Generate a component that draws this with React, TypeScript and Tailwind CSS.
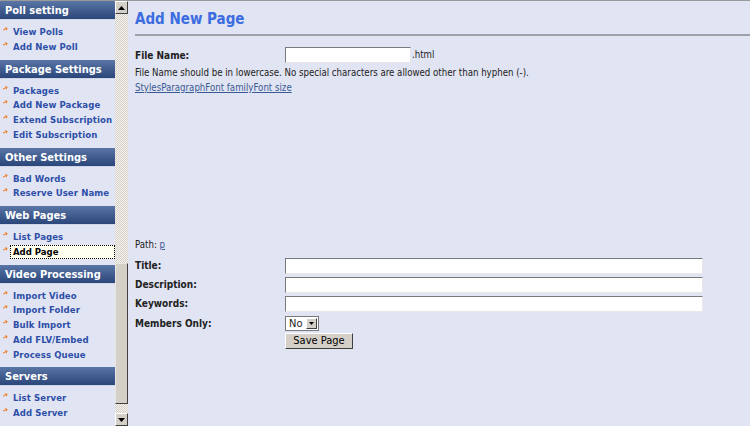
import React from "react";

const sections: { title: string; items: string[]; active?: string }[] = [
  { title: "Poll setting", items: ["View Polls", "Add New Poll"] },
  { title: "Package Settings", items: ["Packages", "Add New Package", "Extend Subscription", "Edit Subscription"] },
  { title: "Other Settings", items: ["Bad Words", "Reserve User Name"] },
  { title: "Web Pages", items: ["List Pages", "Add Page"], active: "Add Page" },
  { title: "Video Processing", items: ["Import Video", "Import Folder", "Bulk Import", "Add FLV/Embed", "Process Queue"] },
  { title: "Servers", items: ["List Server", "Add Server"] },
];

const Bullet = () => (
  <svg width="5" height="5" viewBox="0 0 5 5" className="absolute left-[3px] top-[2px]">
    <path d="M0 1.5 L3 1.5 L3 0 L5 2 L3 4 L3 2.5 L0 2.5 Z" fill="#f07a1e" transform="rotate(-25 2.5 2.5)" />
  </svg>
);

const Input = ({ w }: { w: string }) => (
  <div className={`h-[16px] bg-white border border-t-[#7a7a7a] border-l-[#7a7a7a] border-r-[#e8e8e8] border-b-[#e8e8e8] ${w}`} />
);

export default function App() {
  const font = { fontFamily: "Tahoma, 'DejaVu Sans Condensed', 'DejaVu Sans', sans-serif" };
  return (
    <div className="w-[750px] h-[426px] overflow-hidden flex bg-[#e1e4f2] border-t border-[#9a9a9a]" style={font}>
      {/* Sidebar */}
      <div className="w-[115px] flex flex-col shrink-0">
        {sections.map((s) => (
          <div key={s.title} className="flex flex-col">
            <div className="h-[19px] bg-gradient-to-b from-[#5a76a6] to-[#2b467a] text-white font-bold text-[11px] leading-[19px] pl-[5px] border-b border-[#d0d6e6] whitespace-nowrap">
              {s.title}
            </div>
            <div className="flex flex-col pt-[5px] pb-[5px]">
              {s.items.map((it) =>
                it === s.active ? (
                  <div key={it} className="relative h-[14.75px]">
                    <Bullet />
                    <div className="ml-[10px] h-[14px] border border-dotted border-black bg-[#fffff0] text-black font-bold text-[9.5px] leading-[12px] pl-[2px] whitespace-nowrap">
                      {it}
                    </div>
                  </div>
                ) : (
                  <div key={it} className="relative h-[14.75px] pl-[13px] text-[#2d4fa8] font-bold text-[9.5px] leading-[14px] whitespace-nowrap tracking-[0.1px]">
                    <Bullet />
                    {it}
                  </div>
                )
              )}
            </div>
          </div>
        ))}
      </div>

      {/* Scrollbar */}
      <div className="w-[13px] shrink-0 flex flex-col bg-[repeating-conic-gradient(#f4f3ef_0_25%,#d4d0c8_0_50%)] bg-[length:2px_2px]">
        <div className="h-[13px] bg-[#d4d0c8] border border-t-white border-l-white border-r-[#404040] border-b-[#404040] flex items-center justify-center">
          <svg width="7" height="4" viewBox="0 0 7 4"><path d="M3.5 0 L7 4 L0 4 Z" fill="#000" /></svg>
        </div>
        <div className="flex-1" />
        <div className="h-[141px] bg-[#d4d0c8] border border-t-[#e8e6e0] border-l-[#e8e6e0] border-r-[#404040] border-b-[#404040]" />
        <div className="h-[9px]" />
        <div className="h-[13px] bg-[#d4d0c8] border border-t-white border-l-white border-r-[#404040] border-b-[#404040] flex items-center justify-center">
          <svg width="7" height="4" viewBox="0 0 7 4"><path d="M0 0 L7 0 L3.5 4 Z" fill="#000" /></svg>
        </div>
      </div>

      {/* Main */}
      <div className="flex-1 flex flex-col pl-[7px] text-[9.6px] text-[#222]">
        <div className="h-[33px] flex items-center text-[#3b6ce0] font-bold text-[15px] pt-[3px]">Add New Page</div>
        <div className="h-[2px] bg-[#a0a0a8]" />
        <div className="h-[11px]" />
        <div className="flex items-center h-[16px]">
          <div className="w-[150px] font-bold text-[10px]">File Name:</div>
          <Input w="w-[126px]" />
          <span className="ml-[1px]">.html</span>
        </div>
        <div className="h-[17px] leading-[17px] mt-[1px]">
          File Name should be in lowercase. No special characters are allowed other than hyphen (-).
        </div>
        <div className="h-[14px] leading-[14px] text-[#3a5a94] underline">StylesParagraphFont familyFont size</div>
        <div className="h-[142px]" />
        <div className="h-[16px] leading-[16px]">
          Path: <span className="text-[#3a5a94] underline">p</span>
        </div>
        <div className="h-[3px]" />
        {["Title:", "Description:", "Keywords:"].map((l) => (
          <div key={l} className="flex items-center h-[19px]">
            <div className="w-[150px] font-bold text-[10px]">{l}</div>
            <Input w="w-[418px]" />
          </div>
        ))}
        <div className="flex items-center h-[19px] mt-[1px]">
          <div className="w-[150px] font-bold text-[10px]">Members Only:</div>
          <div className="h-[15px] w-[34px] bg-white border border-[#7a7a7a] flex items-center justify-between pl-[3px]">
            <span className="text-[11px] leading-none">No</span>
            <div className="w-[11px] h-[11px] mr-[1px] bg-[#d4d0c8] border border-t-white border-l-white border-r-[#404040] border-b-[#404040] flex items-center justify-center">
              <svg width="5" height="3" viewBox="0 0 5 3"><path d="M0 0 L5 0 L2.5 3 Z" fill="#000" /></svg>
            </div>
          </div>
        </div>
        <div className="flex h-[18px]">
          <div className="w-[150px]" />
          <div className="h-[16px] w-[68px] bg-[#d4d0c8] border border-t-white border-l-white border-r-[#404040] border-b-[#404040] text-[11px] leading-[14px] text-center text-black">
            Save Page
          </div>
        </div>
      </div>
    </div>
  );
}
